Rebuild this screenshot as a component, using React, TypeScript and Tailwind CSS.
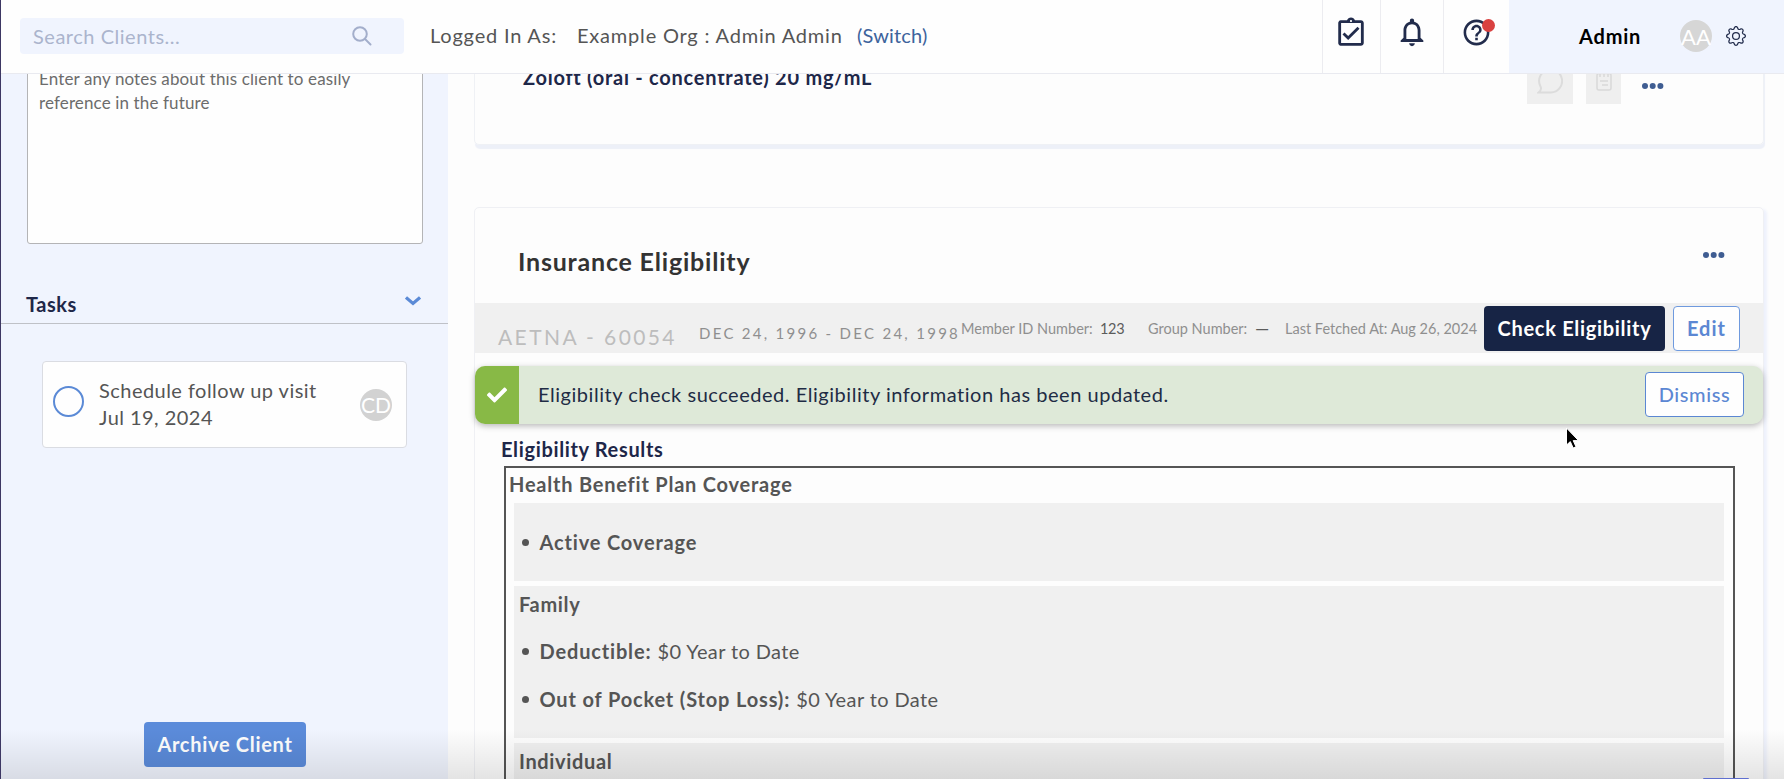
import { BsGear } from "react-icons/bs";
import { FaCheck } from "react-icons/fa";
import { MdHelpOutline, MdNotificationsNone, MdOutlineAssignmentTurnedIn } from "react-icons/md";

const benefitGroups = [
  {
    name: "",
    className: "h-[78px] pt-[25px]",
    items: [{ label: "Active Coverage", value: "" }],
  },
  {
    name: "Family",
    className: "h-[152px] pt-[4px]",
    items: [
      { label: "Deductible:", value: "$0 Year to Date" },
      { label: "Out of Pocket (Stop Loss):", value: "$0 Year to Date" },
    ],
  },
  {
    name: "Individual",
    className: "h-[152px] pt-[4px]",
    items: [],
  },
];

const MoreDots = () => (
  <svg width="22" height="6" viewBox="0 0 22 6" fill="#3f5d92" className="shrink-0">
    <circle cx="3" cy="3" r="3" />
    <circle cx="10.7" cy="3" r="3" />
    <circle cx="18.4" cy="3" r="3" />
  </svg>
);

const Header = () => (
  <header className="flex h-[74px] shrink-0 border-b border-[#e9eaf0] bg-[#fefefe]">
    <div className="flex flex-1 items-center pl-[19px] pb-px">
      <div className="flex h-9 w-[384px] items-center justify-between rounded bg-[#f0f4fe] pl-[13px] pr-8">
        <span className="pb-px text-[20px] tracking-[0.52px] text-[#abb4cd]">Search Clients...</span>
        <svg width="20" height="20" viewBox="0 0 20 20" fill="none" stroke="#a3aecb" strokeWidth="2" strokeLinecap="round">
          <circle cx="8" cy="8" r="6.8" />
          <path d="M13 13 L18.5 18.5" />
        </svg>
      </div>
      <span className="ml-[26px] w-[147px] pb-[2px] text-[20px] tracking-[0.8px]">Logged In As:</span>
      <span className="w-[280px] pb-[2px] text-[20px] tracking-[0.8px]">Example Org : Admin Admin</span>
      <a className="pb-[2px] text-[20px] tracking-[0.15px] text-[#3d639c]">(Switch)</a>
    </div>
    <div className="flex w-[58px] items-center justify-center border-l border-[#ececf0] pb-[8px] pr-px text-[#222c4c]">
      <MdOutlineAssignmentTurnedIn size={34} />
    </div>
    <div className="flex w-[63px] items-center justify-center border-l border-[#ececf0] pb-[9px] text-[#222c4c]">
      <MdNotificationsNone size={34} />
    </div>
    <div className="flex w-[66px] items-center justify-center border-l border-[#ececf0] pb-[8px] text-[#222c4c]">
      <div className="relative">
        <MdHelpOutline size={31} />
        <span className="absolute -right-[3px] top-[2px] size-[13px] rounded-full bg-[#d94140]" />
      </div>
    </div>
    <div className="flex w-[275px] items-center bg-[#f0f4fe] pl-[70px] pb-px">
      <span className="w-[101px] pb-px text-[20px] font-bold tracking-[0.8px] text-black">Admin</span>
      <span className="flex size-8 items-center justify-center rounded-full bg-[#d6d6d6] text-[22px] text-white">AA</span>
      <BsGear size={20} className="ml-[14px] text-[#222c4c]" />
    </div>
  </header>
);

const Sidebar = () => (
  <aside className="flex w-[447px] shrink-0 flex-col bg-[#f0f4fe]">
    <div className="-mt-[14px] ml-[26px] h-[184px] w-[396px] shrink-0 rounded-[3px] border border-[#b4b4b6] bg-[#fefefe] pl-[11px] pt-[6px] text-[17px] leading-[23.5px] tracking-[0.13px] text-[#6c6c6c]">
      <p>Enter any notes about this client to easily</p>
      <p>reference in the future</p>
    </div>

    {/* Tasks */}
    <div className="flex h-[80px] items-end justify-between border-b border-[#bfc1c7] pb-[5px] pl-[25px] pr-[27px]">
      <h3 className="text-[20px] font-bold leading-7 tracking-[0.5px] text-[#1e2749]">Tasks</h3>
      <svg width="16" height="10" viewBox="0 0 16 10" fill="none" stroke="#5b8ad6" strokeWidth="3.2" className="mb-3">
        <path d="M1 1.4 L8 7.4 L15 1.4" />
      </svg>
    </div>
    <div className="ml-[41px] mt-[37px] flex h-[87px] w-[365px] items-center rounded border border-[#dadce2] bg-[#fefefe] pl-[10px] pr-[14px]">
      <span className="mb-[7px] size-[31px] rounded-full border-2 border-[#5b8ad6]" />
      <div className="mb-px ml-[15px] flex-1 text-[20px] leading-[27px] tracking-[0.46px]">
        <p>Schedule follow up visit</p>
        <p>Jul 19, 2024</p>
      </div>
      <span className="flex size-8 items-center justify-center rounded-full bg-[#d2d2d2] text-[21px] text-white">CD</span>
    </div>

    <button className="mb-3 ml-[143px] mt-auto h-[45px] w-[162px] rounded bg-[#5b8bda] pb-[2px] text-[20px] font-bold tracking-[0.7px] text-white">
      Archive Client
    </button>
  </aside>
);

const MedicationCard = () => (
  <section className="-mt-[20px] flex h-[91px] w-[1290px] shrink-0 justify-between rounded-[5px] border border-[#eff1f5] pl-[48px] pr-[99px] pt-[3px] shadow-[1px_4px_1px_#edf0f8]">
    <h3 className="mt-[5px] text-[20px] font-bold leading-7 tracking-[0.75px] text-[#1e2749]">Zoloft (oral - concentrate) 20 mg/mL</h3>
    <div className="flex h-[46px] items-center">
      <span className="flex h-[46px] w-[46px] items-center justify-center bg-[#efefef]">
        <svg width="26" height="26" viewBox="0 0 26 26" fill="none" stroke="#dcdcdc" strokeWidth="2">
          <path d="M1.5 24.5 H14 A11.5 11.5 0 1 0 3.5 18.5 C4.5 20.5 3.5 23 1.5 24.5 Z" />
        </svg>
      </span>
      <span className="ml-[13px] flex h-[46px] w-[35px] items-center justify-center bg-[#efefef]">
        <svg width="16" height="20" viewBox="0 0 16 20" fill="none" stroke="#d9d9d9" strokeWidth="1.5">
          <rect x="1" y="2.5" width="14" height="16.5" rx="2" />
          <path d="M4 1 V6 M8 1 V6 M12 1 V6 M4 10 H12 M6 14 H12" />
        </svg>
      </span>
      <span className="ml-[21px] mt-[10px]">
        <MoreDots />
      </span>
    </div>
  </section>
);

const PlanBar = () => (
  <div className="flex h-[50px] bg-[#f0f0f0] pl-[23px] text-[14.5px] text-[#8f8f8f]">
    <span className="w-[201px] pt-[19px] text-[21px] leading-[30px] tracking-[2.4px] text-[#bdbdbd]">AETNA - 60054</span>
    <span className="w-[262px] whitespace-nowrap pt-[20px] text-[15px] leading-5 tracking-[2.28px]">DEC 24, 1996 - DEC 24, 1998</span>
    <span className="w-[139px] whitespace-nowrap pt-[16px] leading-5">Member ID Number:</span>
    <span className="w-[48px] pt-[16px] leading-5 tracking-[-0.3px] text-[#5c5c5c]">123</span>
    <span className="w-[107px] whitespace-nowrap pt-[16px] leading-5">Group Number:</span>
    <span className="w-[30px] pt-[15px] text-[18px] leading-5 text-[#5c5c5c]">—</span>
    <span className="w-[199px] whitespace-nowrap pt-[16px] leading-5">Last Fetched At: Aug 26, 2024</span>
    <button className="mt-[3px] h-[45px] w-[181px] rounded bg-[#172445] pb-[2px] text-[20px] font-bold tracking-[0.7px] text-white">
      Check Eligibility
    </button>
    <button className="ml-2 mt-[3px] h-[45px] w-[67px] rounded border border-[#6f9ade] bg-[#fefefe] pb-[2px] text-[20px] font-bold tracking-[1px] text-[#5b87d3]">
      Edit
    </button>
  </div>
);

const SuccessAlert = () => (
  <div className="relative mt-[13px] flex h-[58px] items-center rounded-[10px] bg-[#dee9d8] pr-[19px] shadow-[0_2px_6px_rgba(0,0,0,0.28)]">
    <span className="flex h-full w-11 items-center justify-center rounded-l-[10px] bg-[#88b946] text-white">
      <FaCheck size={20} />
    </span>
    <p className="ml-[19px] flex-1 pb-[2px] text-[20px] tracking-[0.53px] text-[#1f2c45]">
      Eligibility check succeeded. Eligibility information has been updated.
    </p>
    <button className="mb-px h-[45px] w-[99px] rounded border border-[#5b87d3] bg-[#fefefe] pb-px text-[20px] font-medium tracking-[0.6px] text-[#5b87d3]">
      Dismiss
    </button>
    {/* Mouse pointer */}
    <svg width="16" height="24" viewBox="0 0 16 24" className="absolute left-[1090px] top-[61px]">
      <path d="M1.5 1 V18 L5.3 14.6 L8.2 21 L11 19.8 L8.2 13.6 H13.5 Z" fill="#000" stroke="#fff" strokeWidth="1" />
    </svg>
  </div>
);

const EligibilityResults = () => (
  <div className="ml-[26px] mt-[11px]">
    <h3 className="text-[20px] font-bold leading-7 tracking-[0.65px] text-[#1e2749]">Eligibility Results</h3>
    <div className="ml-[3px] mt-[3px] w-[1231px] border-2 border-[#555] pl-[8px] pr-[9px] text-[20px] tracking-[0.78px]">
      <h4 className="-ml-[5px] h-[35px] pt-[2px] font-bold leading-7">Health Benefit Plan Coverage</h4>
      {benefitGroups.map((group, index) => (
        <div key={index} className={`mb-[5px] bg-[#f0f0f0] pl-[5px] ${group.className}`}>
          {group.name && <h5 className="mb-[19px] font-bold leading-7 tracking-[0.65px]">{group.name}</h5>}
          <ul>
            {group.items.map((item) => (
              <li key={item.label} className="flex h-[47.5px] items-start">
                <span className="mr-[11px] mt-[11px] size-[7px] translate-x-[3px] rounded-full bg-[#555]" />
                <span className="ml-[2.5px] font-bold leading-7 tracking-[0.84px]">{item.label}</span>
                <span className="ml-[6px] leading-7 tracking-[0.4px]">{item.value}</span>
              </li>
            ))}
          </ul>
        </div>
      ))}
    </div>
  </div>
);

const InsuranceCard = () => (
  <section className="mt-[62px] h-[700px] w-[1290px] shrink-0 rounded-[5px] border border-[#eff0f4] shadow-[3px_2px_3px_#eef1fc]">
    <div className="flex h-[95px] justify-between pl-[43px] pr-[38px]">
      <h2 className="pt-[35px] text-[25px] font-bold leading-9 tracking-[0.8px] text-[#333]">Insurance Eligibility</h2>
      <span className="mt-[44px] h-[6px]">
        <MoreDots />
      </span>
    </div>
    <PlanBar />
    <SuccessAlert />
    <EligibilityResults />
  </section>
);

export default function App() {
  return (
    <div className="relative flex h-[779px] w-[1784px] flex-col overflow-hidden border-l border-[#3d3763] bg-[#fdfdfd] font-['Lato',sans-serif] text-[#555]">
      <Header />
      <div className="flex h-[705px] overflow-hidden">
        <Sidebar />
        <main className="flex flex-1 flex-col pl-[26px]">
          <MedicationCard />
          <InsuranceCard />
        </main>
      </div>

      {/* Bottom shade and the chat launcher peeking in */}
      <div className="pointer-events-none absolute inset-x-0 bottom-0 h-[50px] bg-gradient-to-b from-transparent to-black/10" />
      <div className="absolute bottom-0 left-[1702px] h-[1px] w-[46px] rounded-t-full bg-[#5f6fd0]" />
    </div>
  );
}
